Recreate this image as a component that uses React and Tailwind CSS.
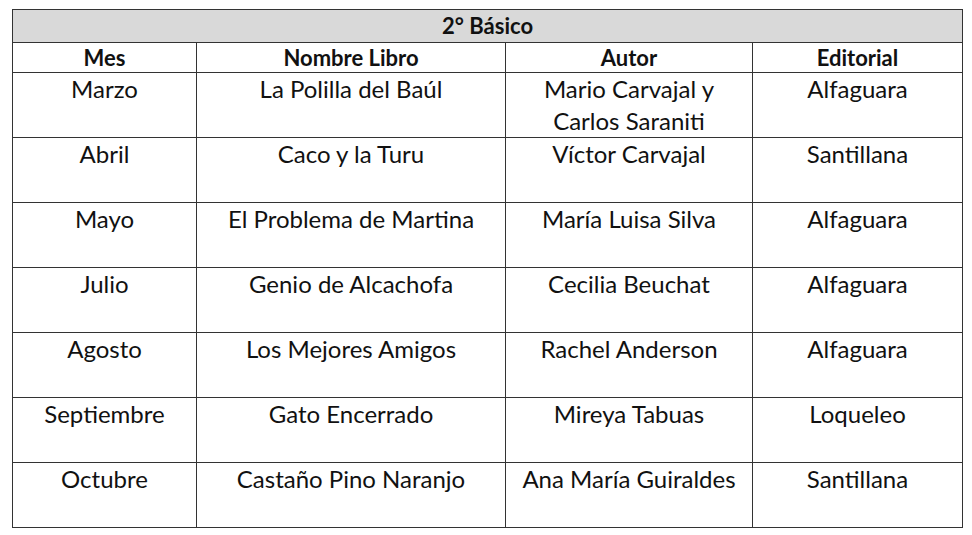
const ROWS = [
  ["Marzo", "La Polilla del Baúl", ["Mario Carvajal y", "Carlos Saraniti"], "Alfaguara"],
  ["Abril", "Caco y la Turu", ["Víctor Carvajal"], "Santillana"],
  ["Mayo", "El Problema de Martina", ["María Luisa Silva"], "Alfaguara"],
  ["Julio", "Genio de Alcachofa", ["Cecilia Beuchat"], "Alfaguara"],
  ["Agosto", "Los Mejores Amigos", ["Rachel Anderson"], "Alfaguara"],
  ["Septiembre", "Gato Encerrado", ["Mireya Tabuas"], "Loqueleo"],
  ["Octubre", "Castaño Pino Naranjo", ["Ana María Guiraldes"], "Santillana"],
];

export default function App() {
  return (
    <div className="w-[972px] h-[535px] bg-white pt-[9px] pl-[12px]" style={{ fontFamily: "Lato, 'Open Sans', sans-serif" }}>
      <table className="table-fixed border-collapse w-[950px] text-[#111]">
        <colgroup>
          <col className="w-[184px]" />
          <col className="w-[309px]" />
          <col className="w-[247px]" />
          <col className="w-[210px]" />
        </colgroup>
        <thead>
          <tr className="h-[33px]">
            <th colSpan={4} className="bg-[#d9d9d9] border border-[#333] font-bold text-[22px] leading-none p-0">2° Básico</th>
          </tr>
          <tr className="h-[30px]">
            {["Mes", "Nombre Libro", "Autor", "Editorial"].map((h) => (
              <th key={h} className="border border-[#333] font-bold text-[22px] leading-none p-0">{h}</th>
            ))}
          </tr>
        </thead>
        <tbody className="text-[24px]">
          {ROWS.map(([mes, libro, autor, editorial]) => (
            <tr key={mes} className="h-[65px]">
              <td className="border border-[#333] align-top text-center leading-[32px] p-0">{mes}</td>
              <td className="border border-[#333] align-top text-center leading-[32px] p-0">{libro}</td>
              <td className="border border-[#333] align-top text-center leading-[32px] p-0">
                {autor.map((a) => <div key={a}>{a}</div>)}
              </td>
              <td className="border border-[#333] align-top text-center leading-[32px] p-0">{editorial}</td>
            </tr>
          ))}
        </tbody>
      </table>
    </div>
  );
}
